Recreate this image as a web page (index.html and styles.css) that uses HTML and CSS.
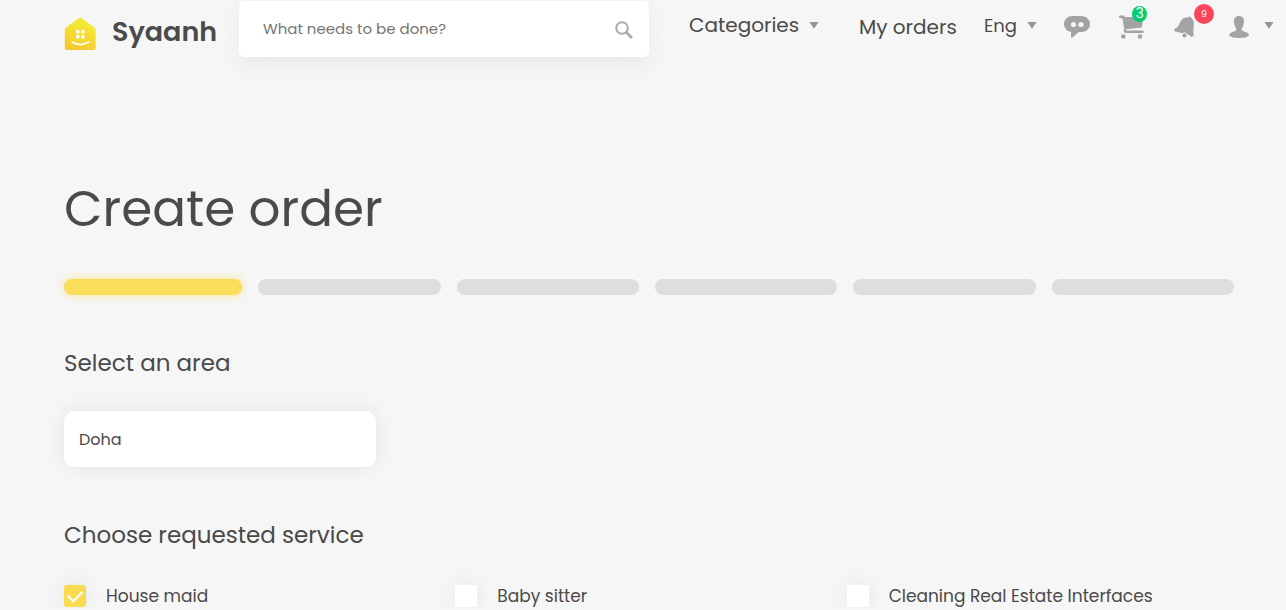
FILE: index.html
```html
<!DOCTYPE html>
<html lang="en">
<head>
<meta charset="utf-8">
<meta name="viewport" content="width=device-width, initial-scale=1">
<title>Syaanh - Create order</title>
<link rel="stylesheet" href="styles.css">
</head>
<body>
<header class="header">
  <a class="brand" href="#">
    <svg class="brand-icon" viewBox="0 0 32 34" aria-hidden="true">
      <defs>
        <linearGradient id="house" x1="0.7" y1="0" x2="0.3" y2="1">
          <stop offset="0" stop-color="#f4ef38"/>
          <stop offset="1" stop-color="#f3c92f"/>
        </linearGradient>
      </defs>
      <path fill="url(#house)" d="M14.800 1.300q1.500-1 3 0l12.700 9.300q1.200 1 1.200 2.500V30.500q0 2.500-2.500 2.500H3.300Q.8 33 .8 30.500V13.100q0-1.500 1.200-2.500z"/>
      <path fill="#fffdf0" d="M12 13h3.500v3.500H12zM17 13h3.500v3.500H17zM12 18h3.500v3.500H12zM17 18h3.500v3.500H17z"/>
      <path fill="none" stroke="#fffdf0" stroke-width="1.800" stroke-linecap="round" d="M8 25q8.500 5 16.500 0"/>
    </svg>
    <span class="brand-name">Syaanh</span>
  </a>
  <form class="search" role="search">
    <input class="search-input" type="text" placeholder="What needs to be done?" aria-label="What needs to be done?">
    <button class="search-button" type="button" aria-label="Search">
      <svg viewBox="0 0 18 18" width="18" height="18" aria-hidden="true"><circle cx="7" cy="7" r="5.800" fill="none" stroke="#aaa" stroke-width="2"/><path d="M11 11l6 6" stroke="#aaa" stroke-width="2.500"/></svg>
    </button>
  </form>
  <nav class="nav" aria-label="Main">
    <button class="menu categories" type="button">Categories<svg class="caret" viewBox="0 0 10 8" aria-hidden="true"><path d="M1 1h8q.6 0 .3.600L5.500 7q-.5.600-1 0L.7 1.600Q.4 1 1 1z"/></svg></button>
    <a class="orders" href="#">My orders</a>
    <button class="menu language" type="button">Eng<svg class="caret" viewBox="0 0 10 8" aria-hidden="true"><path d="M1 1h8q.6 0 .3.600L5.500 7q-.5.600-1 0L.7 1.600Q.4 1 1 1z"/></svg></button>
    <a class="icon-link chat" href="#" aria-label="Messages">
      <svg viewBox="0 0 26 24" width="26" height="24" aria-hidden="true"><path fill="#a3a3a3" d="M9 1h8c5 0 9 3.500 9 8s-4 8-8.500 8h-2.700L8.500 22.500Q7 23.400 7 21.500v-4.700C3 16.300 0 13 0 9c0-4.500 4-8 9-8z"/><circle cx="9.500" cy="9.500" r="2.600" fill="#f5f5f5"/><circle cx="17" cy="9.500" r="2.600" fill="#f5f5f5"/></svg>
    </a>
    <a class="icon-link cart" href="#" aria-label="Cart">
      <svg viewBox="0 0 25 24" width="25" height="24" aria-hidden="true"><path fill="#a3a3a3" d="M1 .6h3.200q1.400 0 1.700 1.400h16.500q1.600 0 1.500 1.400l-.8 7.800q-.2 1.500-1.600 1.600L6.800 14.200q-.2 1.400 1.200 1.400h15.500q1.200 0 1.200 1.200T23.500 18H7q-2.300 0-2.300-2 0-1 .6-1.700L3.400 3.200H1.200Q0 3 0 1.800T1 .6z"/><circle cx="4.300" cy="21.500" r="2.300" fill="#a3a3a3"/><circle cx="21" cy="21.500" r="2.300" fill="#a3a3a3"/></svg>
      <span class="badge badge-cart">3</span>
    </a>
    <a class="icon-link bell" href="#" aria-label="Notifications">
      <svg viewBox="0 0 21 22" width="21" height="22" aria-hidden="true"><path fill="#a3a3a3" d="M14 1.500q2-2 3 .3c2.500 1.700 3.200 4.500 2.800 8-.4 4-.6 6-.1 8.200.8 2.500-2.700 3.500-3.500 2l-1-1L1.500 15.500C-.5 15 0 12.500 2 12c2-1 2.800-2.500 4-5.500C7.300 3 10.500 1 14 1.500z"/><circle cx="10.500" cy="19.300" r="2.900" fill="#f6f6f6"/><circle cx="10.500" cy="19.500" r="2.100" fill="#a3a3a3"/></svg>
      <span class="badge badge-bell">9</span>
    </a>
    <button class="menu account" type="button" aria-label="Account">
      <svg viewBox="0 0 20 22" width="20" height="22" aria-hidden="true"><path fill="#a3a3a3" d="M10 0c3.300 0 5 2.300 5 5.500 0 3-1 5.500-2.300 7v2l5 2q2.300 1 2.300 3Q17.500 22 10 22T0 19.500q0-2 2.300-3l5-2v-2C6 11 5 8.500 5 5.500 5 2.300 6.700 0 10 0z"/></svg>
      <svg class="caret" viewBox="0 0 10 8" aria-hidden="true"><path d="M1 1h8q.6 0 .3.600L5.500 7q-.5.600-1 0L.7 1.600Q.4 1 1 1z"/></svg>
    </button>
  </nav>
</header>
<main class="main">
  <h1 class="title">Create order</h1>
  <ol class="steps" aria-label="Order steps">
    <li class="step step-active" aria-current="step"></li>
    <li class="step"></li>
    <li class="step"></li>
    <li class="step"></li>
    <li class="step"></li>
    <li class="step"></li>
  </ol>
  <h2 class="subtitle"><label for="area">Select an area</label></h2>
  <select class="area" id="area"><option>Doha</option></select>
  <h2 class="subtitle">Choose requested service</h2>
  <div class="services">
    <label class="service"><input class="check" type="checkbox" checked>House maid</label>
    <label class="service"><input class="check" type="checkbox">Baby sitter</label>
    <label class="service"><input class="check" type="checkbox">Cleaning Real Estate Interfaces</label>
  </div>
</main>
</body>
</html>
```
FILE: styles.css
```css
* {
  box-sizing: border-box;
}

body {
  margin: 0;
  background: #f6f6f6;
  color: #4a4a4a;
  font-family: Poppins, Inter, "Open Sans", sans-serif;
}

button, input, select {
  font: inherit;
  color: inherit;
}

a {
  color: inherit;
  text-decoration: none;
}

.header {
  display: flex;
  align-items: flex-start;
  padding: 1px 12px 0 64px;
}

.brand {
  display: flex;
  align-items: flex-start;
  gap: 16px;
  width: 175px;
  padding-top: 16px;
}

.brand-icon {
  width: 32px;
  height: 34px;
}

.brand-name {
  font-size: 27px;
  font-weight: 600;
  line-height: 30px;
}

.search {
  display: flex;
  flex: 1;
  align-items: center;
  height: 56px;
  padding: 0 16px 0 24px;
  border-radius: 5px;
  background: #fff;
  box-shadow: 0 8px 20px rgba(50, 70, 60, 0.07);
}

.search-input {
  flex: 1;
  min-width: 0;
  padding: 0 0 2px;
  border: 0;
  outline: 0;
  background: none;
  font-size: 15px;
}

.search-input::placeholder {
  color: #757575;
}

.search-button {
  display: flex;
  padding: 2px 0 0;
  border: 0;
  background: none;
}

.nav {
  display: flex;
  align-items: center;
  height: 50px;
  padding-left: 40px;
}

.menu {
  display: flex;
  align-items: center;
  justify-content: space-between;
  padding: 0 0 2px;
  border: 0;
  background: none;
}

.caret {
  width: 10px;
  height: 8px;
  fill: #949494;
}

.categories {
  width: 130px;
  margin-right: 40px;
  font-size: 20px;
}

.orders {
  width: 98px;
  margin-right: 27px;
  padding-top: 2px;
  font-size: 20px;
  white-space: nowrap;
}

.language {
  width: 53px;
  margin-right: 27px;
  font-size: 18px;
}

.icon-link {
  position: relative;
  display: flex;
  margin-top: 2px;
}

.chat {
  margin-right: 29px;
}

.cart {
  margin-right: 30px;
}

.bell {
  margin-right: 34px;
}

.account {
  width: 45px;
  padding: 2px 0 0;
}

.account .caret {
  margin-bottom: 4px;
}

.badge {
  position: absolute;
  border-radius: 50%;
  color: #fff;
  text-align: center;
}

.badge-cart {
  top: -9px;
  right: -3px;
  width: 15px;
  height: 16px;
  background: #05cc6d;
  font-size: 14px;
  line-height: 15px;
}

.badge-bell {
  top: -12px;
  right: -19px;
  width: 20px;
  height: 20px;
  background: #f9455b;
  font-size: 9px;
  line-height: 20px;
}

.main {
  padding: 118px 48px 0 64px;
}

.title {
  margin: 0;
  font-size: 50px;
  font-weight: 400;
  line-height: 68px;
}

.steps {
  display: grid;
  grid-template-columns: 178fr repeat(5, 182fr);
  gap: 16px;
  margin: 36px 4px 48px 0;
  padding: 0;
  list-style: none;
}

.step {
  height: 16px;
  border-radius: 8px;
  background: #dedede;
}

.step-active {
  background: #f9de5b;
  box-shadow: 0 0 10px rgba(249, 222, 91, 0.7);
}

.subtitle {
  margin: 0;
  font-size: 23px;
  font-weight: 400;
  line-height: 40px;
}

.area {
  display: block;
  width: 312px;
  height: 56px;
  margin: 28px 0 48px;
  padding: 0 15px;
  border: 0;
  border-radius: 10px;
  background: #fff;
  box-shadow: 0 0 20px rgba(50, 60, 70, 0.09);
  font-size: 16px;
  appearance: none;
}

.services {
  display: grid;
  grid-template-columns: repeat(3, 1fr);
  margin-top: 29px;
}

.service {
  display: flex;
  align-items: center;
  gap: 20px;
  font-size: 17px;
  line-height: 24px;
}

.check {
  width: 22px;
  height: 22px;
  margin: 0;
  border-radius: 3px;
  background: #fff;
  box-shadow: 0 0 20px rgba(50, 60, 70, 0.09);
  appearance: none;
}

.check:checked {
  display: grid;
  place-items: center;
  background: #f9db52;
}

.check:checked::before {
  content: "";
  width: 12px;
  height: 7px;
  margin-bottom: 4px;
  border: solid #fff;
  border-width: 0 0 2px 2px;
  transform: rotate(-45deg);
}
```
